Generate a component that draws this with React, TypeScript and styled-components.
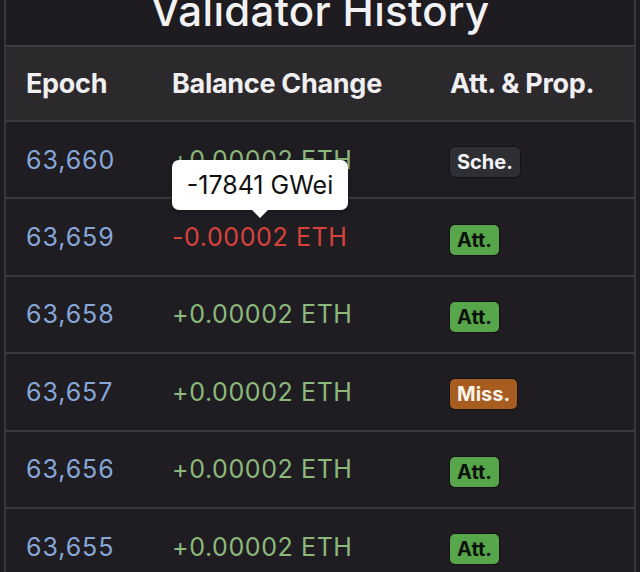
import React from "react";
import styled, { createGlobalStyle } from "styled-components";

const Global = createGlobalStyle`
  html, body { margin: 0; padding: 0; background: #1c1b1f; }
  body { font-family: Inter, "Noto Sans", sans-serif; }
`;

const Page = styled.div`
  width: 640px;
  height: 572px;
  overflow: hidden;
  background: #1c1b1f;
  padding: 0 4px;
  box-sizing: border-box;
`;

const Frame = styled.div`
  border-left: 2px solid #38363a;
  border-right: 2px solid #38363a;
  background: #1f1d22;
  height: 100%;
  position: relative;
`;

const TitleBar = styled.div`
  height: 45px;
  overflow: hidden;
  border-bottom: 2px solid #3d3b3f;
  display: flex;
  justify-content: center;
  background: #1e1c20;
`;

const Title = styled.h1`
  margin: -14px 0 0;
  font-size: 42px;
  line-height: 50px;
  font-weight: 500;
  color: #f2f2f4;
  letter-spacing: 0.3px;
`;

const Row = styled.div<{ $head?: boolean }>`
  display: grid;
  grid-template-columns: 146px 278px 1fr;
  align-items: center;
  height: ${(p) => (p.$head ? "73px" : "75.4px")};
  padding-left: 20px;
  background: ${(p) => (p.$head ? "#2c292c" : "#1f1d22")};
  border-bottom: 2px solid #3b393d;
  box-sizing: content-box;
  position: relative;
`;

const HeadCell = styled.div`
  font-size: 27px;
  font-weight: 700;
  color: #f0eff2;
  letter-spacing: -0.3px;
`;

const Epoch = styled.div`
  font-size: 25px;
  color: #87a7d8;
  letter-spacing: 0.9px;
`;

const Amount = styled.div<{ $neg?: boolean }>`
  font-size: 25px;
  color: ${(p) => (p.$neg ? "#d8423c" : "#8cb97b")};
  letter-spacing: 0.6px;
`;

const badgeColors = {
  sche: { bg: "#2e2f35", fg: "#f4f4f6" },
  att: { bg: "#58a64c", fg: "#0b120a" },
  miss: { bg: "#a65d1f", fg: "#fbf4ea" },
};

const Badge = styled.span<{ $kind: keyof typeof badgeColors }>`
  display: inline-block;
  justify-self: start;
  margin: 5px 0 0 0;
  padding: 3px 7px;
  border-radius: 5px;
  font-size: 20px;
  line-height: 24px;
  font-weight: 700;
  background: ${(p) => badgeColors[p.$kind].bg};
  color: ${(p) => badgeColors[p.$kind].fg};
  box-shadow: 0 0 0 1px rgba(0, 0, 0, 0.35);
`;

const Tooltip = styled.div`
  position: absolute;
  left: 166px;
  top: 160px;
  width: 176px;
  height: 50px;
  background: #ffffff;
  border-radius: 7px;
  display: flex;
  align-items: center;
  justify-content: center;
  font-size: 25px;
  color: #111;
  box-shadow: 0 2px 6px rgba(0, 0, 0, 0.3);
  z-index: 2;
  &::after {
    content: "";
    position: absolute;
    left: 80px;
    bottom: -8px;
    border-left: 8px solid transparent;
    border-right: 8px solid transparent;
    border-top: 8px solid #ffffff;
  }
`;

type Kind = keyof typeof badgeColors;
const rows: { epoch: string; amount: string; neg?: boolean; kind: Kind; label: string }[] = [
  { epoch: "63,660", amount: "+0.00002 ETH", kind: "sche", label: "Sche." },
  { epoch: "63,659", amount: "-0.00002 ETH", neg: true, kind: "att", label: "Att." },
  { epoch: "63,658", amount: "+0.00002 ETH", kind: "att", label: "Att." },
  { epoch: "63,657", amount: "+0.00002 ETH", kind: "miss", label: "Miss." },
  { epoch: "63,656", amount: "+0.00002 ETH", kind: "att", label: "Att." },
  { epoch: "63,655", amount: "+0.00002 ETH", kind: "att", label: "Att." },
  { epoch: "63,654", amount: "+0.00002 ETH", kind: "att", label: "Att." },
];

export default function App() {
  return (
    <>
      <Global />
      <Page>
        <Frame>
          <TitleBar>
            <Title>Validator History</Title>
          </TitleBar>
          <Row $head>
            <HeadCell>Epoch</HeadCell>
            <HeadCell>Balance Change</HeadCell>
            <HeadCell>Att. &amp; Prop.</HeadCell>
          </Row>
          {rows.map((r) => (
            <Row key={r.epoch}>
              <Epoch>{r.epoch}</Epoch>
              <Amount $neg={r.neg}>{r.amount}</Amount>
              <Badge $kind={r.kind}>{r.label}</Badge>
            </Row>
          ))}
          <Tooltip>-17841 GWei</Tooltip>
        </Frame>
      </Page>
    </>
  );
}
